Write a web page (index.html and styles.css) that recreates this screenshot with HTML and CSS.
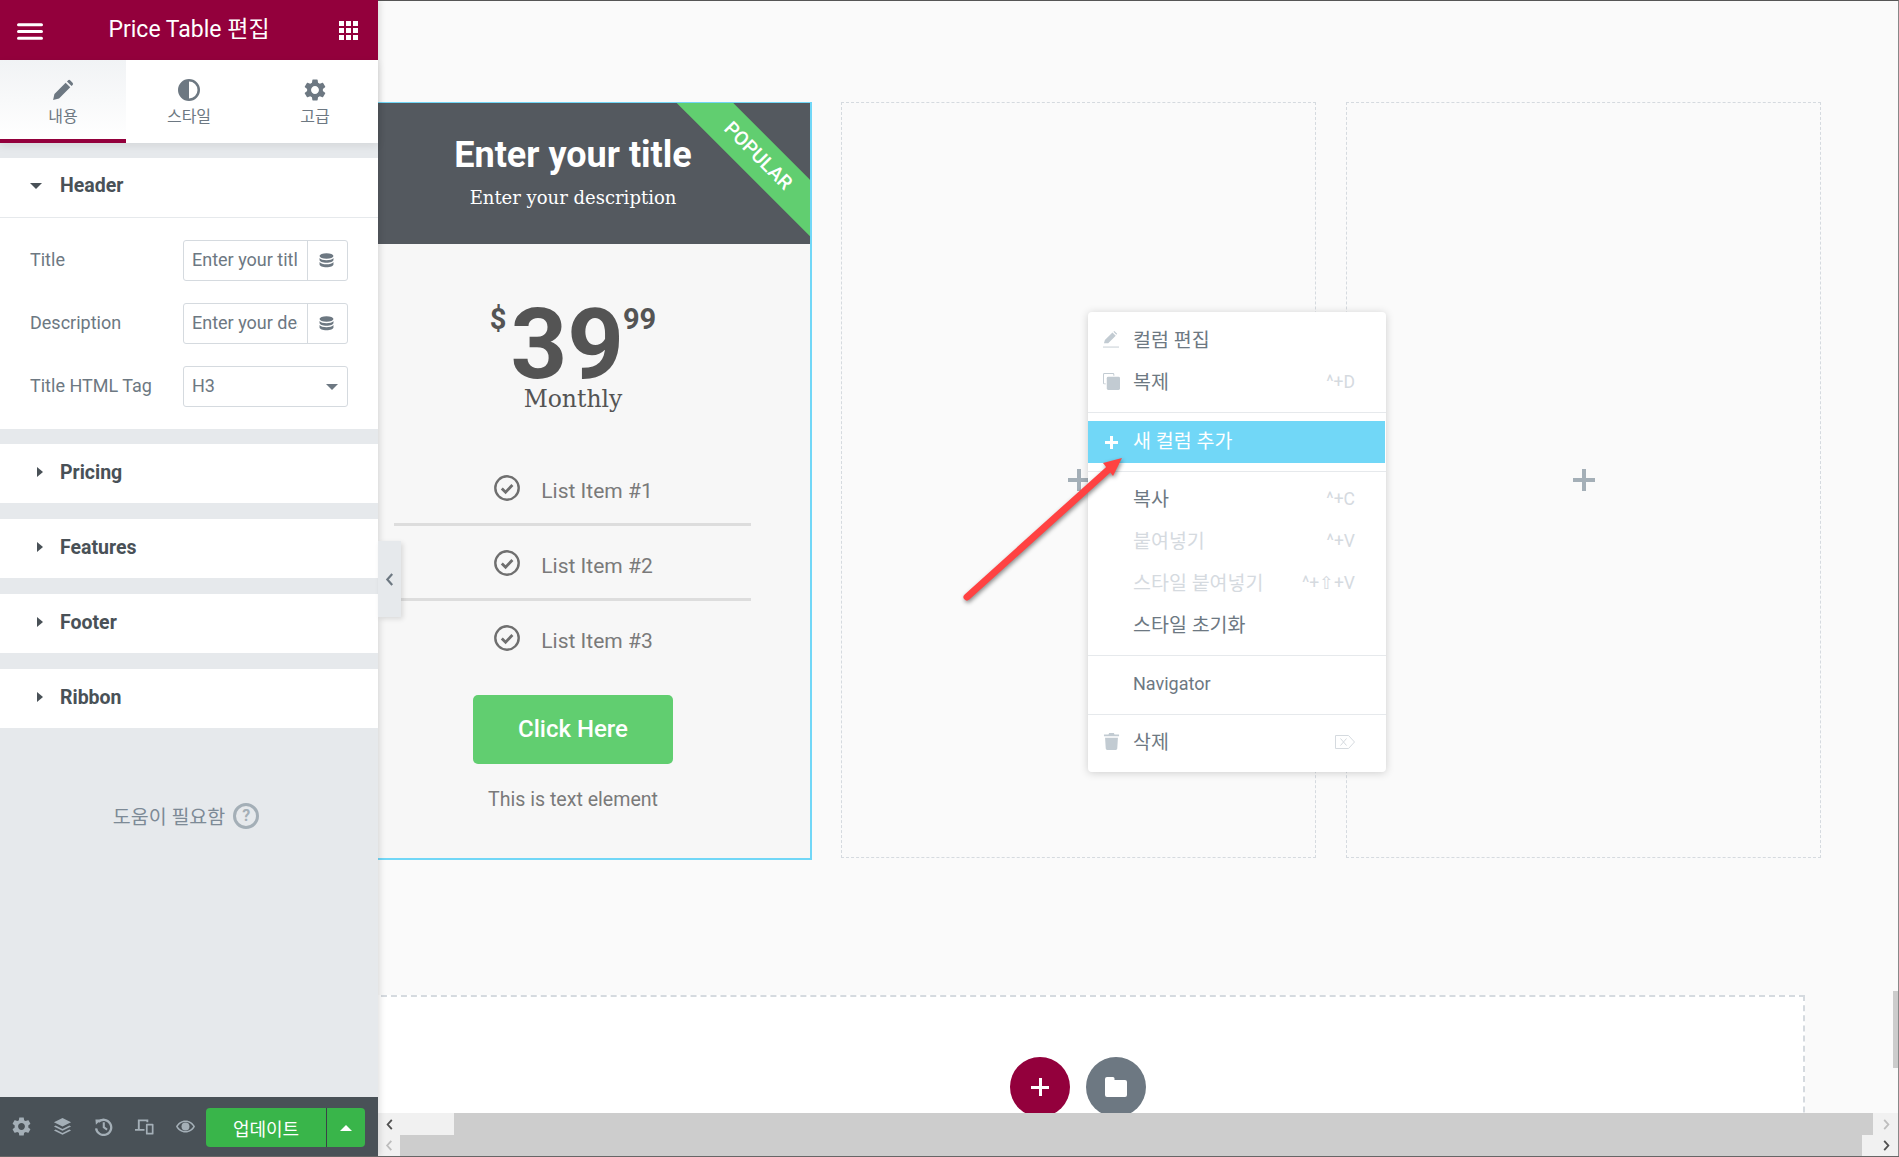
FILE: index.html
```html
<!DOCTYPE html>
<html lang="ko">
<head>
    <meta charset="UTF-8">
    <title>Price Table 편집</title>
    <link rel="stylesheet" href="styles.css">
</head>
<body>
    <svg class="icon-defs" width="0" height="0">
        <symbol id="i-cog" viewBox="2 2 20 20"><path d="M19.14 12.94c.04-.3.06-.61.06-.94 0-.32-.02-.64-.07-.94l2.03-1.58c.18-.14.23-.41.12-.61l-1.92-3.32c-.12-.22-.37-.29-.59-.22l-2.39.96c-.5-.38-1.03-.7-1.62-.94l-.36-2.54c-.04-.24-.24-.41-.48-.41h-3.84c-.24 0-.43.17-.47.41l-.36 2.54c-.59.24-1.13.57-1.62.94l-2.39-.96c-.22-.08-.47 0-.59.22L2.74 8.87c-.12.21-.08.47.12.61l2.03 1.58c-.05.3-.09.63-.09.94s.02.64.07.94l-2.03 1.58c-.18.14-.23.41-.12.61l1.92 3.32c.12.22.37.29.59.22l2.39-.96c.5.38 1.03.7 1.62.94l.36 2.54c.05.24.24.41.48.41h3.84c.24 0 .44-.17.47-.41l.36-2.54c.59-.24 1.13-.56 1.62-.94l2.39.96c.22.08.47 0 .59-.22l1.92-3.32c.12-.22.07-.47-.12-.61l-2.01-1.58zM12 15.6c-1.98 0-3.6-1.62-3.6-3.6s1.62-3.6 3.6-3.6 3.6 1.62 3.6 3.6-1.62 3.6-3.6 3.6z"/></symbol>
        <symbol id="i-pencil" viewBox="0 0 20 20"><path d="M1 19l1.200-5.400L12.400 3.400l4.200 4.200L6.400 17.800zM13.600 2.200l.9-.9a1.600 1.600 0 0 1 2.200 0l2 2a1.600 1.600 0 0 1 0 2.200l-.9.9z"/></symbol>
        <symbol id="i-db" viewBox="0 0 14 14"><ellipse cx="7" cy="2.800" rx="6.500" ry="2.600"/><path d="M.5 4.600c1 1.500 3.600 2.100 6.500 2.100s5.500-.6 6.500-2.100v2c0 1.400-2.900 2.500-6.500 2.500S.5 8 .5 6.600zM.5 8.400c1 1.500 3.600 2.100 6.500 2.100s5.500-.6 6.500-2.100v2.400c0 1.400-2.900 2.600-6.500 2.600S.5 12.200.5 10.800z"/></symbol>
        <symbol id="i-check" viewBox="0 0 26 26"><circle cx="13" cy="13" r="11.700" fill="none" stroke="currentColor" stroke-width="2.400"/><path d="M7.800 13.400l3.800 3.800 6.800-7.200" fill="none" stroke="currentColor" stroke-width="2.800"/></symbol>
        <symbol id="i-chev" viewBox="0 0 8 12"><path d="M6.500 1L2 6l4.500 5" fill="none" stroke="currentColor" stroke-width="2"/></symbol>
    </svg>

    <div class="app">
        <aside class="sidebar">
            <header class="side-head">
                <svg class="burger" viewBox="0 0 25 16"><path d="M1.500 1.500h22M1.500 8h22M1.500 14.500h22"/></svg>
                <h1>Price Table 편집</h1>
                <div class="apps"><i></i><i></i><i></i><i></i><i></i><i></i><i></i><i></i><i></i></div>
            </header>

            <nav class="tabs">
                <div class="tab active">
                    <svg class="tab-icon"><use href="#i-pencil"/></svg>
                    <span>내용</span>
                </div>
                <div class="tab">
                    <svg class="tab-icon" viewBox="0 0 22 22"><path fill-rule="evenodd" d="M11 0a11 11 0 1 0 0 22 11 11 0 0 0 0-22zm0 2.500v17a8.500 8.500 0 0 0 0-17z"/></svg>
                    <span>스타일</span>
                </div>
                <div class="tab">
                    <svg class="tab-icon"><use href="#i-cog"/></svg>
                    <span>고급</span>
                </div>
            </nav>

            <div class="panel">
                <section class="group">
                    <h2 class="group-title open"><i class="caret-down"></i>Header</h2>
                    <div class="controls">
                        <div class="control">
                            <label>Title</label>
                            <div class="field">
                                <span class="field-text">Enter your title</span>
                                <span class="field-btn"><svg><use href="#i-db"/></svg></span>
                            </div>
                        </div>
                        <div class="control">
                            <label>Description</label>
                            <div class="field">
                                <span class="field-text">Enter your description</span>
                                <span class="field-btn"><svg><use href="#i-db"/></svg></span>
                            </div>
                        </div>
                        <div class="control">
                            <label>Title HTML Tag</label>
                            <div class="field">
                                <span class="field-text">H3</span>
                                <i class="select-caret"></i>
                            </div>
                        </div>
                    </div>
                </section>
                <section class="group"><h2 class="group-title"><i class="caret-right"></i>Pricing</h2></section>
                <section class="group"><h2 class="group-title"><i class="caret-right"></i>Features</h2></section>
                <section class="group"><h2 class="group-title"><i class="caret-right"></i>Footer</h2></section>
                <section class="group"><h2 class="group-title"><i class="caret-right"></i>Ribbon</h2></section>

                <div class="help">도움이 필요함 <span class="help-mark">?</span></div>
            </div>

            <footer class="side-foot">
                <svg class="foot-icon"><use href="#i-cog"/></svg>
                <svg class="foot-icon" viewBox="0 0 20 20"><path d="M10 1l9 4.500-9 4.500-9-4.500z"/><path d="M2.800 9L10 12.600 17.200 9 19 10l-9 4.500L1 10zM2.800 13.200l7.200 3.600 7.200-3.600L19 14.200l-9 4.500-9-4.500z"/></svg>
                <svg class="foot-icon" viewBox="0 0 20 20"><path d="M4.500 5.200A8 8 0 1 1 2.200 12" fill="none" stroke="currentColor" stroke-width="2.400"/><path d="M1.500 2.500l6 .2-5.500 5.500zM9.200 5.500h2.200v4.800l3 2-1.200 1.800-4-2.700z"/></svg>
                <svg class="foot-icon" viewBox="0 0 20 18"><path d="M3 1.500h11v3h-2v-1H5v8h5v2H0v-2h3zM12.500 6h6a1 1 0 0 1 1 1v9.500a1 1 0 0 1-1 1h-6a1 1 0 0 1-1-1V7a1 1 0 0 1 1-1zm.8 2v7.500h4.400V8z"/></svg>
                <svg class="foot-icon" viewBox="0 0 22 14"><path fill-rule="evenodd" d="M11 0C6 0 2 3 0 7c2 4 6 7 11 7s9-3 11-7c-2-4-6-7-11-7zm0 1.800c4 0 7.200 2.200 9 5.200-1.800 3-5 5.200-9 5.200S3.800 10 2 7c1.800-3 5-5.200 9-5.200z"/><circle cx="11" cy="7" r="4.600"/></svg>
                <div class="publish">
                    <span class="publish-main">업데이트</span>
                    <span class="publish-more"><i class="caret-up"></i></span>
                </div>
            </footer>
        </aside>

        <main class="canvas">
            <div class="columns">
                <div class="price-card">
                    <div class="price-head">
                        <h3>Enter your title</h3>
                        <p>Enter your description</p>
                        <div class="ribbon">POPULAR</div>
                    </div>
                    <div class="price-value">
                        <span class="currency">$</span>
                        <span class="amount">39</span>
                        <span class="cents">99</span>
                    </div>
                    <div class="period">Monthly</div>
                    <ul class="features">
                        <li><svg><use href="#i-check"/></svg>List Item #1</li>
                        <li><svg><use href="#i-check"/></svg>List Item #2</li>
                        <li><svg><use href="#i-check"/></svg>List Item #3</li>
                    </ul>
                    <a class="cta">Click Here</a>
                    <p class="note">This is text element</p>
                </div>
                <div class="empty-col"><i class="col-plus"></i></div>
                <div class="empty-col"><i class="col-plus"></i></div>
            </div>

            <div class="add-section">
                <span class="round-btn red"><i class="btn-plus"></i></span>
                <span class="round-btn grey">
                    <svg viewBox="0 0 22 20"><path d="M2 0h6a1.500 1.500 0 0 1 1.500 1.500V3H20a2 2 0 0 1 2 2v13a2 2 0 0 1-2 2H2a2 2 0 0 1-2-2V2a2 2 0 0 1 2-2z"/></svg>
                </span>
            </div>

            <div class="vscroll"></div>
            <div class="hscrolls">
                <div class="hscroll">
                    <span class="scroll-end start"><svg class="dark"><use href="#i-chev"/></svg></span>
                    <span class="scroll-end end"><svg class="pale flip"><use href="#i-chev"/></svg></span>
                </div>
                <div class="hscroll second">
                    <span class="scroll-end start"><svg class="pale"><use href="#i-chev"/></svg></span>
                    <span class="scroll-end end"><svg class="dark flip"><use href="#i-chev"/></svg></span>
                </div>
            </div>
        </main>

        <div class="collapse-handle"><svg><use href="#i-chev"/></svg></div>

        <div class="context-menu">
            <div class="menu-group first">
                <div class="menu-item">
                    <svg class="menu-icon" viewBox="0 0 18 18"><path d="M1 13l1-3.500L10 1.500 13.500 5 5.500 13zM11 .8l1-.8 3 3-.8 1z"/><path d="M0 16.500h17v1H0z"/></svg>
                    <span>컬럼 편집</span>
                </div>
                <div class="menu-item">
                    <svg class="menu-icon" viewBox="0 0 18 18"><path d="M1.500 0h9A1.500 1.500 0 0 1 12 1.500V3h-1V1.500a.5.500 0 0 0-.5-.5h-9a.5.500 0 0 0-.5.500v9a.5.500 0 0 0 .5.500H3v1H1.500A1.500 1.500 0 0 1 0 10.500v-9A1.500 1.500 0 0 1 1.500 0z"/><rect x="4" y="4" width="14" height="14" rx="1.500"/></svg>
                    <span>복제</span><kbd>^+D</kbd>
                </div>
            </div>
            <div class="menu-group tight">
                <div class="menu-item highlight"><i class="menu-plus"></i><span>새 컬럼 추가</span></div>
            </div>
            <div class="menu-group">
                <div class="menu-item"><span>복사</span><kbd>^+C</kbd></div>
                <div class="menu-item disabled"><span>붙여넣기</span><kbd>^+V</kbd></div>
                <div class="menu-item disabled"><span>스타일 붙여넣기</span><kbd>^+⇧+V</kbd></div>
                <div class="menu-item"><span>스타일 초기화</span></div>
            </div>
            <div class="menu-group mid">
                <div class="menu-item latin"><span>Navigator</span></div>
            </div>
            <div class="menu-group">
                <div class="menu-item">
                    <svg class="menu-icon" viewBox="0 0 16 18"><path d="M5.500 0h5l.7 1.500H16v2H0v-2h4.800zM1.200 5h13.600l-.7 11.500A1.600 1.600 0 0 1 12.500 18h-9a1.600 1.600 0 0 1-1.600-1.500z"/></svg>
                    <span>삭제</span>
                    <svg class="del-key" viewBox="0 0 20 14"><path d="M.5.500h13L19.500 7l-6 6.500H.5zM5.500 3.500l6 7M11.500 3.500l-6 7"/></svg>
                </div>
            </div>
        </div>

        <svg class="arrow" viewBox="0 0 1899 1157">
            <path class="arrow-line" d="M967 597L1108 470"/>
            <path class="arrow-head" d="M1122 458L1103 463L1113 476z"/>
        </svg>
    </div>
</body>
</html>
```

FILE: styles.css
```css
* {
    box-sizing: border-box;
}
html, body {
    margin: 0;
    height: 100%;
    overflow: hidden;
}
body {
    font-family: Roboto, "Noto Sans CJK KR", sans-serif;
    color: #6d7882;
    background-color: #fafafa;
    border-bottom: 1px solid #666;
}
h1, h2, h3, p, ul {
    margin: 0;
    padding: 0;
}
.icon-defs {
    position: absolute;
}
.app {
    position: relative;
    display: flex;
    height: 1156px;
}

/* sidebar */
.sidebar {
    position: relative;
    z-index: 2;
    display: flex;
    flex-direction: column;
    flex: 0 0 378px;
    background-color: #e6e9ec;
    box-shadow: 2px 0 6px rgba(0,0,0,0.12);
}
.side-head {
    display: flex;
    align-items: center;
    justify-content: space-between;
    height: 60px;
    padding: 0 20px 0 17px;
    background-color: #93003c;
    color: white;
}
.side-head h1 {
    font-size: 23px;
    font-weight: 400;
    margin-top: -6px;
    margin-right: 4px;
}
.burger {
    width: 26px;
    height: 17px;
    margin-top: 2px;
    fill: none;
    stroke: white;
    stroke-width: 3;
    stroke-linecap: round;
}
.apps {
    display: grid;
    grid-template-columns: repeat(3, 5px);
    grid-auto-rows: 5px;
    gap: 2px;
    margin-top: 1px;
}
.apps i {
    background-color: white;
}
.tabs {
    display: grid;
    grid-template-columns: repeat(3, 1fr);
    height: 83px;
    background-color: white;
    box-shadow: 0 3px 8px rgba(0,0,0,0.08);
    position: relative;
}
.tab {
    display: flex;
    flex-direction: column;
    align-items: center;
    padding-top: 19px;
    font-size: 16px;
    color: #6d7882;
}
.tab.active {
    border-bottom: 4px solid #93003c;
    background: linear-gradient(#f1f3f5, white);
}
.tab-icon {
    width: 22px;
    height: 22px;
    fill: #6d7882;
    margin-bottom: 2px;
}
.panel {
    flex: 1;
    padding-top: 15px;
}
.group {
    background-color: white;
    margin-bottom: 16px;
}
.group:first-child {
    margin-bottom: 15px;
}
.group-title {
    display: flex;
    align-items: center;
    height: 59px;
    padding: 0 0 2px 60px;
    position: relative;
    font-size: 19.5px;
    font-weight: 700;
    color: #495157;
}
.group-title.open {
    border-bottom: 1px solid #e6e9ec;
    height: 60px;
    padding-bottom: 4px;
}
.caret-down {
    position: absolute;
    left: 30px;
    top: 25px;
    border-left: 6px solid transparent;
    border-right: 6px solid transparent;
    border-top: 6px solid #495157;
}
.caret-right {
    position: absolute;
    left: 37px;
    top: 23px;
    border-top: 5px solid transparent;
    border-bottom: 5px solid transparent;
    border-left: 6px solid #495157;
}
.controls {
    display: flex;
    flex-direction: column;
    gap: 22px;
    padding: 22px 30px 22px;
}
.control {
    display: flex;
    align-items: center;
    justify-content: space-between;
    font-size: 18px;
}
.control label {
    padding-bottom: 2px;
}
.field {
    display: flex;
    align-items: center;
    position: relative;
    width: 165px;
    height: 41px;
    border: 1px solid #d5dadf;
    border-radius: 3px;
    font-size: 18px;
}
.field-text {
    flex: 0 0 106px;
    margin-left: 8px;
    margin-right: 9px;
    padding-bottom: 2px;
    overflow: hidden;
    white-space: nowrap;
}
.field-btn {
    display: flex;
    align-items: center;
    justify-content: center;
    flex: 1;
    height: 100%;
    padding-right: 3px;
    border-left: 1px solid #d5dadf;
}
.field-btn svg {
    width: 15px;
    height: 15px;
    fill: #6d7882;
}
.select-caret {
    position: absolute;
    right: 9px;
    top: 17px;
    border-left: 6px solid transparent;
    border-right: 6px solid transparent;
    border-top: 6px solid #6d7882;
}
.help {
    display: flex;
    align-items: center;
    justify-content: center;
    gap: 8px;
    margin-top: 73px;
    padding-right: 6px;
    font-size: 19.5px;
    color: #7d8a96;
}
.help-mark {
    display: flex;
    align-items: center;
    justify-content: center;
    width: 26px;
    height: 26px;
    border: 3px solid #a4afb7;
    border-radius: 50%;
    font-size: 16px;
    font-weight: 700;
    color: #a4afb7;
}
.side-foot {
    display: flex;
    align-items: center;
    height: 59px;
    padding-left: 12px;
    background-color: #495157;
    flex: none;
}
.foot-icon {
    flex: none;
    width: 19px;
    height: 19px;
    margin-right: 22px;
    fill: #a4afb7;
    color: #a4afb7;
}
.publish {
    position: absolute;
    left: 206px;
    bottom: 9px;
    display: flex;
    width: 159px;
    height: 39px;
    border-radius: 4px;
    overflow: hidden;
    background-color: #39b54a;
    color: white;
    font-size: 18px;
}
.publish-main {
    flex: 0 0 120px;
    display: flex;
    align-items: center;
    justify-content: center;
}
.publish-more {
    flex: 1;
    display: flex;
    align-items: center;
    justify-content: center;
    border-left: 1px solid #3a4248;
}
.caret-up {
    border-left: 6px solid transparent;
    border-right: 6px solid transparent;
    border-bottom: 6px solid white;
}

/* canvas */
.canvas {
    position: relative;
    flex: 1;
    overflow: hidden;
    border-top: 1px solid #555;
    border-right: 1px solid #888;
    background-color: #fafafa;
}
.columns {
    display: grid;
    grid-template-columns: repeat(3, 475px);
    gap: 30px;
    margin: 101px 0 0 -42px;
}
.price-card {
    display: flex;
    flex-direction: column;
    align-items: center;
    height: 758px;
    margin: 0 -1px;
    border: 1px solid #71d7f7;
    border-right-width: 2px;
    border-bottom-width: 2px;
    background-color: #f7f7f7;
}
.price-head {
    position: relative;
    width: 100%;
    height: 141px;
    padding-top: 29px;
    overflow: hidden;
    text-align: center;
    background-color: #54595f;
    color: white;
}
.price-head h3 {
    font-size: 36px;
    line-height: 46px;
    font-weight: 700;
}
.price-head p {
    margin-top: 6px;
    font-family: "DejaVu Serif", serif;
    font-size: 18px;
    line-height: 28px;
}
.ribbon {
    position: absolute;
    right: -98px;
    top: 33px;
    width: 300px;
    height: 40px;
    line-height: 40px;
    transform: rotate(45deg);
    background-color: #61ce70;
    font-size: 19.5px;
    font-weight: 500;
}
.price-value {
    display: flex;
    align-items: flex-start;
    height: 88px;
    margin-top: 54px;
    color: #545454;
    font-weight: 700;
}
.currency {
    font-size: 29px;
    line-height: 34px;
    margin-top: 4px;
    margin-right: 4px;
}
.amount {
    font-size: 99px;
    line-height: 92px;
}
.cents {
    font-size: 29px;
    line-height: 34px;
    margin-top: 4px;
    margin-left: -1px;
}
.period {
    font-family: "DejaVu Serif", serif;
    font-size: 23.5px;
    line-height: 28px;
    color: #545454;
    margin-top: -1px;
}
.features {
    list-style: none;
    width: 357px;
    margin: 38px 1px 0 0;
    font-size: 21px;
    color: #7a7a7a;
}
.features li {
    display: flex;
    align-items: center;
    justify-content: center;
    height: 75px;
    border-bottom: 3px solid #ddd;
    padding: 7px 0 0 2px;
}
.features li:last-child {
    border-bottom-color: transparent;
}
.features svg {
    width: 26px;
    height: 26px;
    margin-right: 21px;
    margin-top: -6px;
    color: #6f6f6f;
}
.cta {
    display: flex;
    align-items: center;
    justify-content: center;
    width: 200px;
    height: 69px;
    margin-top: 19px;
    padding-bottom: 2px;
    border-radius: 5px;
    background-color: #61ce70;
    color: white;
    font-size: 24px;
    font-weight: 500;
}
.note {
    margin-top: 24px;
    font-size: 19.6px;
    color: #7a7a7a;
}
.empty-col {
    display: flex;
    align-items: center;
    justify-content: center;
    height: 756px;
    border: 1px dashed #d5dadf;
    background-color: #fafafa;
}
.col-plus, .btn-plus {
    display: block;
}
.col-plus {
    width: 22px;
    height: 22px;
    background:
        linear-gradient(#a4afb7, #a4afb7) center / 22px 4px no-repeat,
        linear-gradient(#a4afb7, #a4afb7) center / 4px 22px no-repeat;
}
.add-section {
    display: flex;
    justify-content: center;
    gap: 16px;
    width: 1454px;
    height: 300px;
    margin: 135px 0 0 -27px;
    padding-top: 60px;
    border: 2px dashed #d5dadf;
    background-color: white;
}
.round-btn {
    display: flex;
    align-items: center;
    justify-content: center;
    width: 60px;
    height: 60px;
    border-radius: 50%;
}
.round-btn.red {
    background-color: #93003c;
}
.round-btn.grey {
    background-color: #6d7882;
}
.round-btn svg {
    width: 22px;
    height: 20px;
    fill: white;
}
.btn-plus {
    width: 18px;
    height: 18px;
    background:
        linear-gradient(white, white) center / 18px 3px no-repeat,
        linear-gradient(white, white) center / 3px 18px no-repeat;
}
.vscroll {
    position: absolute;
    right: 0;
    top: 990px;
    width: 5px;
    height: 77px;
    background-color: #ccc;
}
.hscrolls {
    position: absolute;
    left: 0;
    right: 0;
    bottom: 0;
}
.hscroll {
    display: flex;
    justify-content: space-between;
    height: 22px;
    background-color: #cdcdcd;
}
.hscroll.second {
    height: 21px;
}
.scroll-end {
    display: flex;
    align-items: center;
    background-color: #f1f1f1;
    padding: 0 7px;
}
.hscroll .start {
    width: 76px;
}
.hscroll .end {
    width: 25px;
    justify-content: flex-end;
}
.hscroll.second .start {
    width: 22px;
}
.hscroll.second .end {
    width: 36px;
}
.scroll-end svg {
    width: 9px;
    height: 11px;
}
.scroll-end .dark {
    color: #505050;
}
.scroll-end .pale {
    color: #bdbdbd;
}
.scroll-end .flip {
    transform: scaleX(-1);
}

/* things on top of the page */
.collapse-handle {
    position: absolute;
    z-index: 2;
    left: 378px;
    top: 541px;
    display: flex;
    align-items: center;
    justify-content: center;
    width: 23px;
    height: 76px;
    background-color: #e6e9ec;
    box-shadow: 2px 2px 5px rgba(0,0,0,0.12);
    color: #6d7882;
}
.collapse-handle svg {
    width: 9px;
    height: 13px;
}
.context-menu {
    position: absolute;
    z-index: 3;
    left: 1088px;
    top: 312px;
    width: 298px;
    height: 460px;
    border-radius: 4px;
    background-color: white;
    box-shadow: 0 1px 8px rgba(0,0,0,0.18);
    font-size: 19.5px;
}
.menu-group {
    padding: 5px 0 10px;
    border-bottom: 1px solid #e6e9ec;
}
.menu-group:last-child {
    border-bottom: none;
}
.menu-group.first {
    padding-top: 6px;
}
.menu-group.tight {
    padding: 8px 1px 8px 0;
}
.menu-group.mid {
    padding: 7px 0 9px;
}
.menu-item {
    position: relative;
    display: flex;
    align-items: center;
    justify-content: space-between;
    height: 42px;
    padding: 0 31px 2px 45px;
    color: #6d7882;
}
.menu-item.latin {
    font-size: 18px;
}
.menu-item.disabled {
    color: #d5dadf;
}
.menu-item.highlight {
    background-color: #71d7f7;
    color: white;
    padding-bottom: 6px;
}
.menu-item kbd {
    margin-top: 3px;
    font-family: Roboto, "DejaVu Sans", sans-serif;
    font-size: 17.5px;
    color: #d5dadf;
}
.menu-icon {
    position: absolute;
    left: 15px;
    top: 13px;
    width: 17px;
    height: 17px;
    fill: #c2cbd2;
}
.menu-plus {
    position: absolute;
    left: 17px;
    top: 15px;
    width: 13px;
    height: 13px;
    background:
        linear-gradient(white, white) center / 13px 3px no-repeat,
        linear-gradient(white, white) center / 3px 13px no-repeat;
}
.del-key {
    width: 20px;
    height: 14px;
    margin-top: 3px;
    fill: none;
    stroke: #d5dadf;
}
.arrow {
    position: absolute;
    z-index: 4;
    left: 0;
    top: 0;
    width: 1899px;
    height: 1157px;
    pointer-events: none;
    filter: drop-shadow(1px 2px 2px rgba(0,0,0,0.45));
}
.arrow-line {
    fill: none;
    stroke: #ff4242;
    stroke-width: 7;
    stroke-linecap: round;
}
.arrow-head {
    fill: #ff4242;
}
```
